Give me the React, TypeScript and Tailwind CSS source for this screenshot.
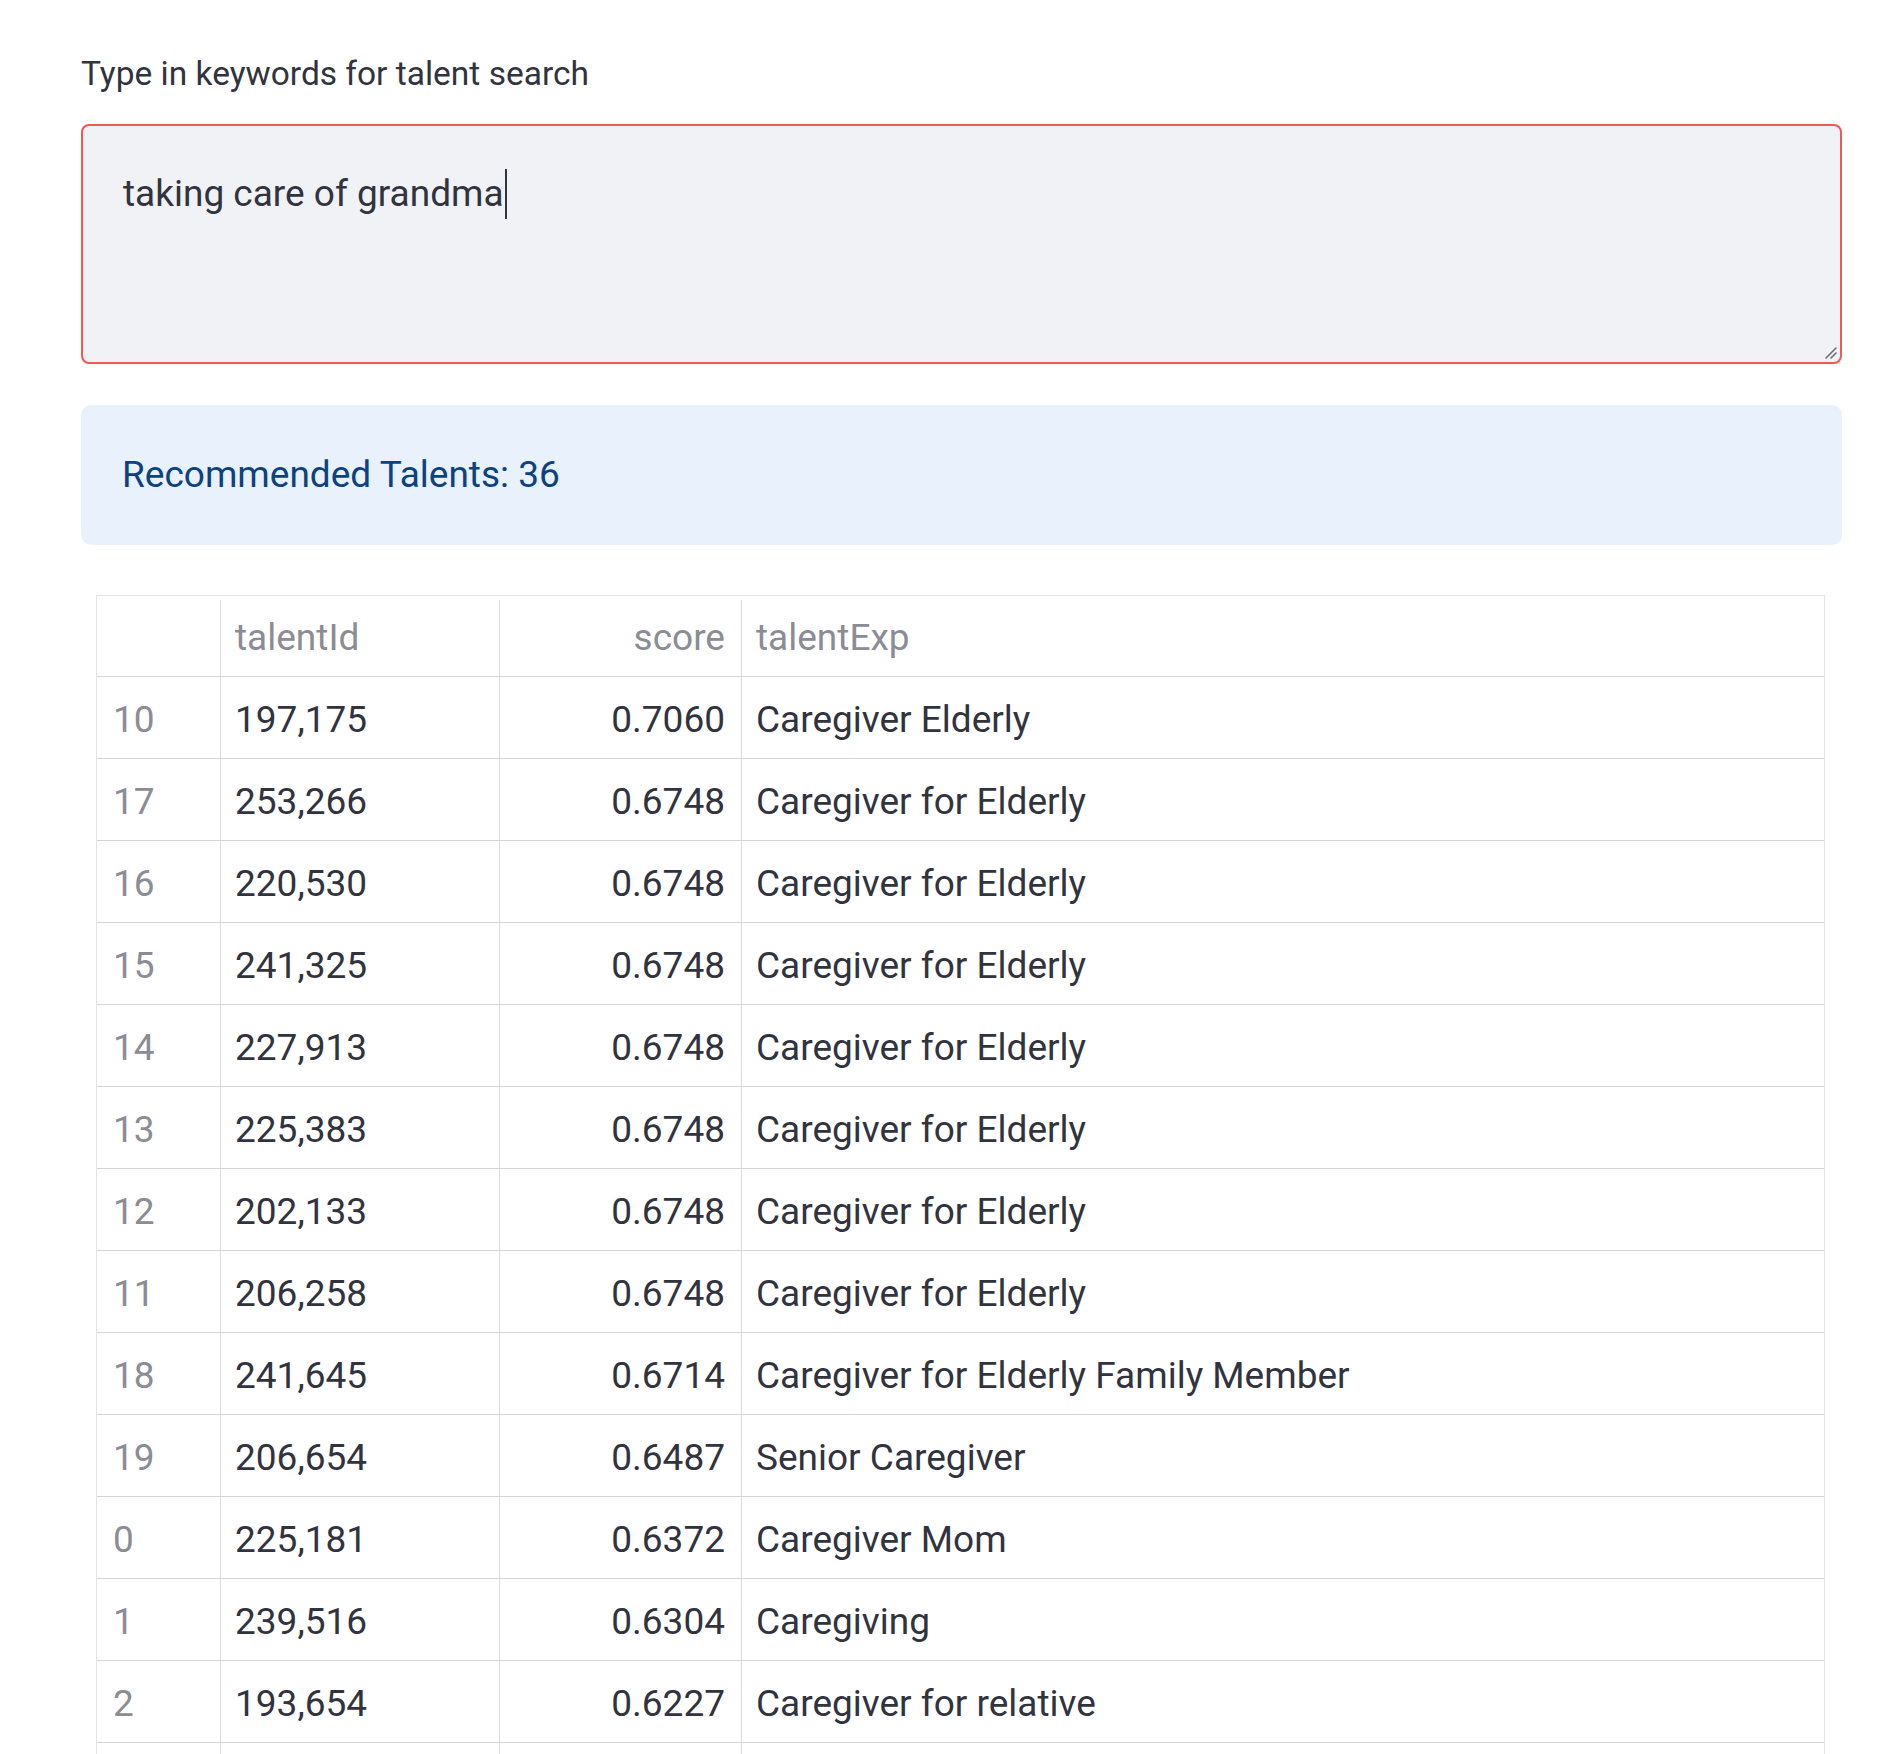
import React from "react";

type Row = {
  idx: number;
  talentId: string;
  score: string;
  talentExp: string;
};

const rows: Row[] = [
  { idx: 10, talentId: "197,175", score: "0.7060", talentExp: "Caregiver Elderly" },
  { idx: 17, talentId: "253,266", score: "0.6748", talentExp: "Caregiver for Elderly" },
  { idx: 16, talentId: "220,530", score: "0.6748", talentExp: "Caregiver for Elderly" },
  { idx: 15, talentId: "241,325", score: "0.6748", talentExp: "Caregiver for Elderly" },
  { idx: 14, talentId: "227,913", score: "0.6748", talentExp: "Caregiver for Elderly" },
  { idx: 13, talentId: "225,383", score: "0.6748", talentExp: "Caregiver for Elderly" },
  { idx: 12, talentId: "202,133", score: "0.6748", talentExp: "Caregiver for Elderly" },
  { idx: 11, talentId: "206,258", score: "0.6748", talentExp: "Caregiver for Elderly" },
  { idx: 18, talentId: "241,645", score: "0.6714", talentExp: "Caregiver for Elderly Family Member" },
  { idx: 19, talentId: "206,654", score: "0.6487", talentExp: "Senior Caregiver" },
  { idx: 0, talentId: "225,181", score: "0.6372", talentExp: "Caregiver Mom" },
  { idx: 1, talentId: "239,516", score: "0.6304", talentExp: "Caregiving" },
  { idx: 2, talentId: "193,654", score: "0.6227", talentExp: "Caregiver for relative" },
];

const ResizeHandle = () => (
  <svg
    className="absolute bottom-[3px] right-[3px]"
    width="14"
    height="14"
    viewBox="0 0 14 14"
  >
    <path d="M3 13 L13 3" stroke="#6b6d75" strokeWidth="1.6" strokeLinecap="round" />
    <path d="M8 13 L13 8" stroke="#6b6d75" strokeWidth="1.6" strokeLinecap="round" />
  </svg>
);

const TalentTable = () => {
  return (
    <div className="ml-[15px] w-[1729px] border-t border-l border-r border-[#e4e4e4] text-[37px]">
      {/* header */}
      <div className="grid h-[81px] grid-cols-[124px_279px_242px_1fr] border-b border-[#d4d4d4] pt-[4px] text-[#8b8c94]">
        <div className="border-r border-[#dcdcdc]"></div>
        <div className="flex items-center border-r border-[#dcdcdc] pl-[14px]">talentId</div>
        <div className="flex items-center justify-end border-r border-[#dcdcdc] pr-[16px]">score</div>
        <div className="flex items-center pl-[14px]">talentExp</div>
      </div>

      {rows.map((r) => (
        <div
          key={r.idx}
          className="grid h-[82px] grid-cols-[124px_279px_242px_1fr] border-b border-[#d4d4d4]"
        >
          <div className="flex items-center border-r border-[#dcdcdc] pl-[16px] pt-[5px] text-[#8b8c94]">
            {r.idx}
          </div>
          <div className="flex items-center border-r border-[#dcdcdc] pl-[14px] pt-[5px]">{r.talentId}</div>
          <div className="flex items-center justify-end border-r border-[#dcdcdc] pr-[16px] pt-[5px]">
            {r.score}
          </div>
          <div className="flex items-center pl-[14px] pt-[5px]">{r.talentExp}</div>
        </div>
      ))}

      {/* next row, scrolled out of view */}
      <div className="grid h-[82px] grid-cols-[124px_279px_242px_1fr]">
        <div className="border-r border-[#dcdcdc]"></div>
        <div className="border-r border-[#dcdcdc]"></div>
        <div className="border-r border-[#dcdcdc]"></div>
        <div></div>
      </div>
    </div>
  );
};

const App: React.FC = () => {
  return (
    <div className="h-[1754px] w-[1878px] overflow-hidden bg-white font-['Roboto',sans-serif] text-[#31333f]">
      <div className="pl-[81px] pr-[36px] pt-[54px]">
        <label className="block text-[33.5px] leading-[40px]">Type in keywords for talent search</label>

        <div className="relative mt-[30px] h-[240px] rounded-[8px] border-2 border-[#ee5a52] bg-[#f0f2f6] px-[40px] pt-[43px]">
          <div className="text-[37px] leading-[50px]">
            taking care of grandma
            <span className="ml-[1px] inline-block h-[50px] w-[2px] bg-[#31333f] align-top"></span>
          </div>
          <ResizeHandle />
        </div>

        <div className="mt-[41px] flex h-[140px] items-center rounded-[10px] bg-[#e9f1fc] px-[41px]">
          <span className="text-[37px] leading-[60px] text-[#0d4282]">Recommended Talents: 36</span>
        </div>

        <div className="mt-[50px]">
          <TalentTable />
        </div>
      </div>
    </div>
  );
};

export default App;
